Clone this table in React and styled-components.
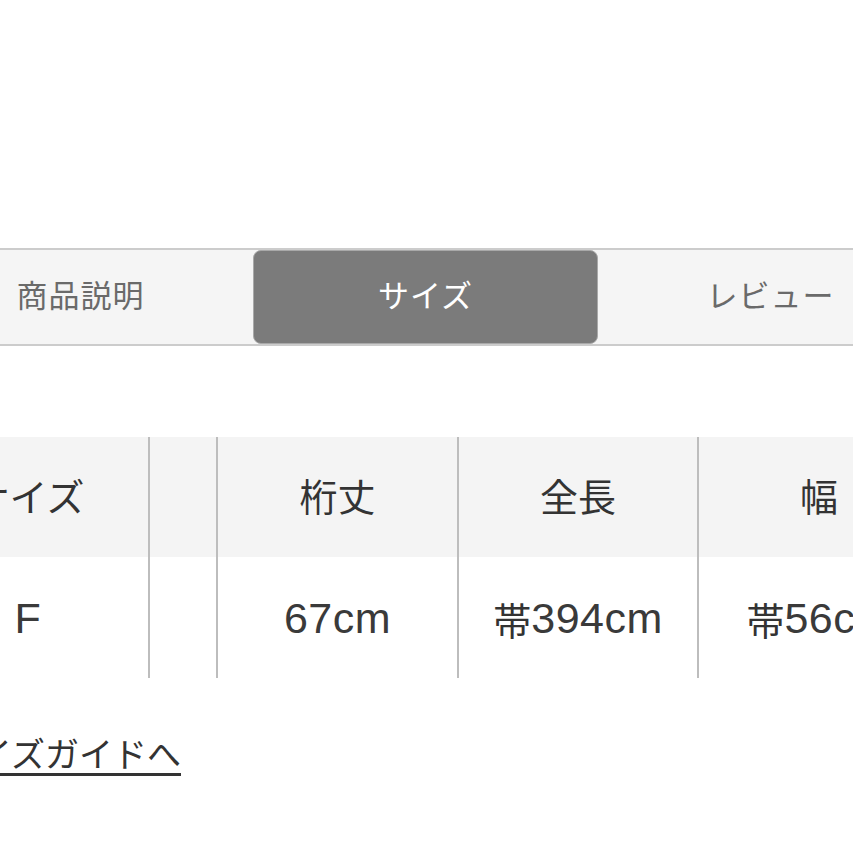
import React from 'react';
import styled, { createGlobalStyle } from 'styled-components';

const tabs = ['商品説明', 'サイズ', 'レビュー'];
const columns = [
  { head: 'サイズ', prefix: '', value: 'F', width: 242 },
  { head: '', prefix: '', value: '', width: 68 },
  { head: '桁丈', prefix: '', value: '67cm', width: 241 },
  { head: '全長', prefix: '帯', value: '394cm', width: 240 },
  { head: '幅', prefix: '帯', value: '56cm', width: 240 },
];

export default function App() {
  return (
    <Page>
      <GlobalStyle />
      <Inner>
        <TabBar>
          {tabs.map((t, i) => (
            <Tab key={t} $active={i === 1}>{t}</Tab>
          ))}
        </TabBar>

        <SizeTable>
          {columns.map((c, i) => (
            <Column key={i} $width={c.width} $last={i === columns.length - 1}>
              <HeadCell>{c.head}</HeadCell>
              <BodyCell>
                {c.prefix}
                <Latin>{c.value}</Latin>
              </BodyCell>
            </Column>
          ))}
        </SizeTable>

        <GuideLink href="#">サイズガイドへ</GuideLink>
      </Inner>
    </Page>
  );
}

const GlobalStyle = createGlobalStyle`
  html, body {
    margin: 0;
    background: #fff;
    overflow: hidden;
  }
  body {
    font-family: "Noto Sans CJK JP", "Noto Sans", sans-serif;
  }
`;

const Page = styled.div`
  width: 853px;
  height: 853px;
  overflow: hidden;
  padding-top: 248px;
  box-sizing: border-box;
`;

const Inner = styled.div`
  margin-left: -92px;
  width: 1035px;
  display: flex;
  flex-direction: column;
`;

const TabBar = styled.div`
  display: flex;
  height: 94px;
  background: #f5f5f5;
  border-top: 2px solid #cccccc;
  border-bottom: 2px solid #cccccc;
`;

const Tab = styled.div`
  width: 345px;
  display: flex;
  align-items: center;
  justify-content: center;
  box-sizing: border-box;
  padding-bottom: 7px;
  font-size: 31px;
  letter-spacing: 1px;
  color: ${(p) => (p.$active ? '#ffffff' : '#6a6a6a')};
  background: ${(p) => (p.$active ? '#7b7b7b' : 'transparent')};
  border: ${(p) => (p.$active ? '1px solid #a9a9a9' : 'none')};
  border-radius: 8px;
`;

const SizeTable = styled.div`
  display: flex;
  margin-top: 91px;
`;

const Column = styled.div`
  width: ${(p) => p.$width}px;
  display: flex;
  flex-direction: column;
  box-sizing: border-box;
  border-right: ${(p) => (p.$last ? 'none' : '2px solid #bdbdbd')};
`;

const HeadCell = styled.div`
  height: 120px;
  box-sizing: border-box;
  padding-bottom: 6px;
  background: #f4f4f4;
  display: flex;
  align-items: center;
  justify-content: center;
  font-size: 38px;
  color: #333;
`;

const BodyCell = styled.div`
  height: 121px;
  box-sizing: border-box;
  padding-top: 2px;
  display: flex;
  align-items: center;
  justify-content: center;
  font-size: 38px;
  color: #333;
`;

const Latin = styled.span`
  font-family: "Liberation Sans", Arial, sans-serif;
  font-size: 43px;
  letter-spacing: 0.5px;
  color: #3a3a3a;
`;

const GuideLink = styled.a`
  align-self: flex-start;
  margin-top: 50px;
  margin-left: 36px;
  font-size: 34px;
  color: #333;
  text-decoration: underline;
  text-decoration-thickness: 3px;
  text-underline-offset: 6px;
  text-decoration-color: #333;
`;
